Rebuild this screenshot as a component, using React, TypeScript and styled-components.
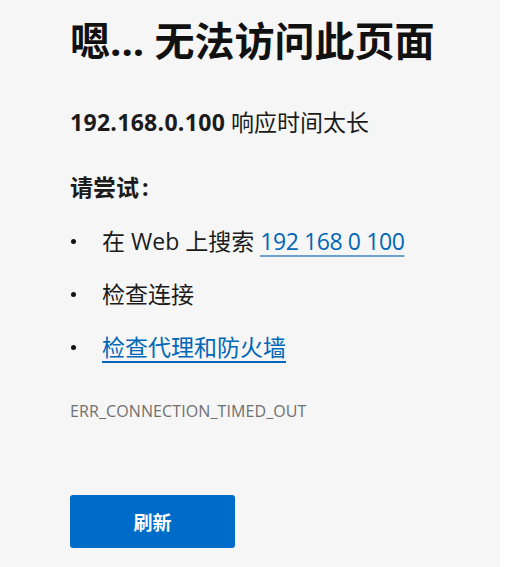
import styled, { createGlobalStyle } from 'styled-components';

const GlobalStyle = createGlobalStyle`
  html, body {
    margin: 0;
    padding: 0;
    background: #ffffff;
  }
  body {
    font-family: "Open Sans", "Noto Sans CJK SC", sans-serif;
    color: #1b1b1b;
  }
`;

const Page = styled.div`
  display: flex;
  height: 567px;
  overflow: hidden;
`;

const Panel = styled.main`
  width: 500px;
  background: #f6f6f6;
  padding: 17px 0 0 70px;
  box-sizing: border-box;
  display: flex;
  flex-direction: column;
  align-items: flex-start;
`;

const Title = styled.h1`
  margin: 0;
  font-size: 40px;
  line-height: 48px;
  font-weight: 700;
  color: #111111;
`;

const Summary = styled.p`
  margin: 41px 0 0;
  font-size: 23px;
  line-height: 32px;
  color: #1b1b1b;

  strong {
    font-weight: 700;
    letter-spacing: 0.3px;
  }
`;

const SubTitle = styled.h2`
  margin: 33px 0 0;
  font-size: 23px;
  line-height: 32px;
  font-weight: 700;

  span {
    margin-left: 3px;
  }
`;

const Suggestions = styled.ul`
  list-style: none;
  margin: 22px 0 0;
  padding: 0;
  display: flex;
  flex-direction: column;
  gap: 21px;
`;

const Item = styled.li`
  display: flex;
  align-items: center;
  font-size: 23px;
  line-height: 32px;
  color: #1b1b1b;

  &::before {
    content: '';
    width: 5px;
    height: 5px;
    border-radius: 50%;
    background: #111111;
    margin: 0 26px 0 1px;
    flex-shrink: 0;
  }
`;

const Link = styled.a<{ $soft?: boolean }>`
  color: #0067b8;
  text-decoration: underline;
  text-decoration-thickness: 2px;
  text-underline-offset: 5px;
  text-decoration-color: ${(p) => (p.$soft ? '#6ea0cf' : '#0067b8')};
  letter-spacing: ${(p) => (p.$soft ? '-0.4px' : '0')};
`;

const ErrorCode = styled.div`
  margin-top: 36px;
  font-size: 16px;
  line-height: 24px;
  letter-spacing: 0.1px;
  color: #707070;
`;

const ReloadButton = styled.button`
  margin-top: 72px;
  width: 165px;
  height: 53px;
  border: none;
  border-radius: 3px;
  background: #006cc9;
  color: #ffffff;
  font-family: "Noto Sans CJK SC", sans-serif;
  font-size: 19px;
  font-weight: 700;
  cursor: pointer;
`;

export default function App() {
  return (
    <>
      <GlobalStyle />
      <Page>
        <Panel>
          <Title>嗯... 无法访问此页面</Title>
          <Summary>
            <strong>192.168.0.100</strong> 响应时间太长
          </Summary>
          <SubTitle>
            请尝试<span>:</span>
          </SubTitle>
          <Suggestions>
            <Item>
              在 Web 上搜索&nbsp;<Link $soft href="#">192 168 0 100</Link>
            </Item>
            <Item>检查连接</Item>
            <Item>
              <Link href="#">检查代理和防火墙</Link>
            </Item>
          </Suggestions>
          <ErrorCode>ERR_CONNECTION_TIMED_OUT</ErrorCode>
          <ReloadButton>刷新</ReloadButton>
        </Panel>
      </Page>
    </>
  );
}
